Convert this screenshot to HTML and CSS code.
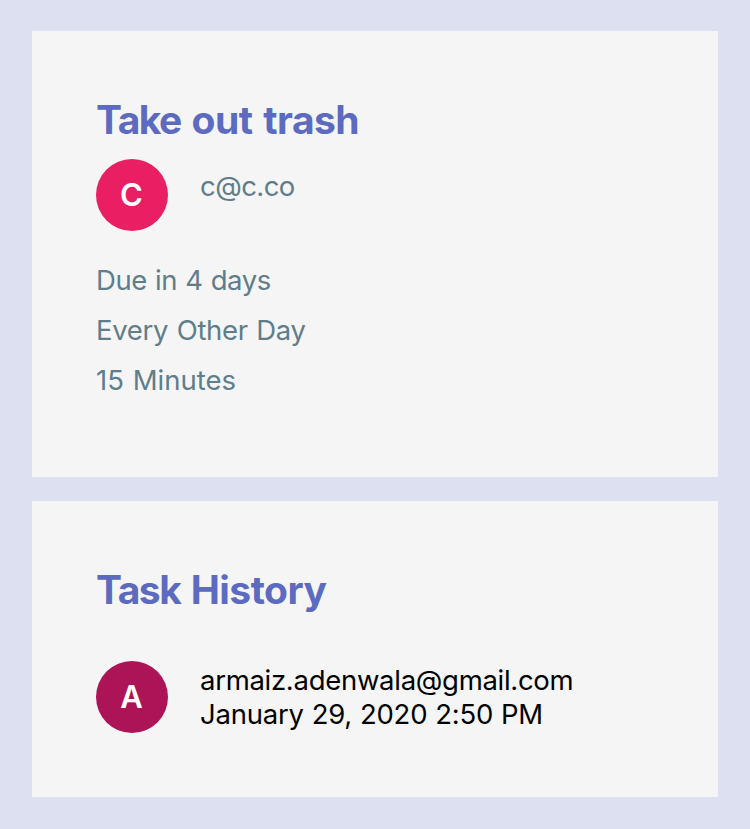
FILE: index.html
```html
<!DOCTYPE html>
<html lang="en">
<head>
<meta charset="utf-8">
<title>Take out trash</title>
<link rel="stylesheet" href="styles.css">
</head>
<body>
<main class="page">
  <section class="card task">
    <h1 class="title"><span class="t1"><span class="lead">Take</span> out trash</span></h1>
    <div class="assignee">
      <div class="avatar pink"><span>C</span></div>
      <span class="email">c@c.co</span>
    </div>
    <ul class="details">
      <li><span class="d1">Due in 4 days</span></li>
      <li><span class="d2">Every Other Day</span></li>
      <li><span class="d3">15 Minutes</span></li>
    </ul>
  </section>
  <section class="card history">
    <h2 class="title"><span class="t2"><span class="lead">Task</span> History</span></h2>
    <div class="entry">
      <div class="avatar plum"><span>A</span></div>
      <div class="info">
        <div><span class="e1">armaiz.adenwala@gmail.com</span></div>
        <div><span class="e2">January 29, 2020 2:50 PM</span></div>
      </div>
    </div>
  </section>
</main>
</body>
</html>
```
FILE: styles.css
```css
* { box-sizing: border-box; }
body {
  margin: 0;
  background: #dce0f1;
  font-family: Inter, "Liberation Sans", sans-serif;
  font-size: 27.5px;
}
.page {
  display: flex;
  flex-direction: column;
  gap: 24px;
  height: 829px;
  padding: 31px 32px 32px;
}
.card {
  background: #f5f5f5;
  padding: 64px;
}
.task { height: 446px; }
.history { height: 296px; }
.title {
  margin: 0;
  height: 52px;
  line-height: 49px;
  font-size: 39px;
  font-weight: 700;
  color: #5c6bc0;
  white-space: nowrap;
}
.t1 { letter-spacing: -0.5px; word-spacing: 2px; }
.t2 { letter-spacing: -0.5px; word-spacing: 1.6px; }
.lead { letter-spacing: -1.5px; }
.d1 { letter-spacing: -0.42px; word-spacing: 0.8px; }
.d2 { letter-spacing: -0.3px; word-spacing: 1px; }
.d3 { letter-spacing: 0; word-spacing: 1px; }
.e1 { letter-spacing: -0.29px; }
.e2 { letter-spacing: -0.24px; word-spacing: 0.5px; }
.assignee {
  display: flex;
  gap: 32px;
  margin-top: 12px;
  color: #607d8b;
}
.email {
  padding-top: 10px;
  line-height: 34px;
  letter-spacing: -0.55px;
}
.avatar {
  display: flex;
  align-items: center;
  justify-content: center;
  flex: none;
  width: 72px;
  height: 72px;
  padding: 0 1px 1px 0;
  border-radius: 50%;
  color: #fff;
  font-size: 31px;
  font-weight: 600;
}
.pink { background: #e91e63; }
.plum { background: #ad1457; }
.details {
  list-style: none;
  margin: 24px 0 0;
  padding: 0;
  color: #607d8b;
  line-height: 50px;
}
.entry {
  display: flex;
  gap: 32px;
  margin-top: 44px;
}
.info {
  padding-top: 2px;
  line-height: 34px;
  color: #000;
  white-space: nowrap;
}
```
